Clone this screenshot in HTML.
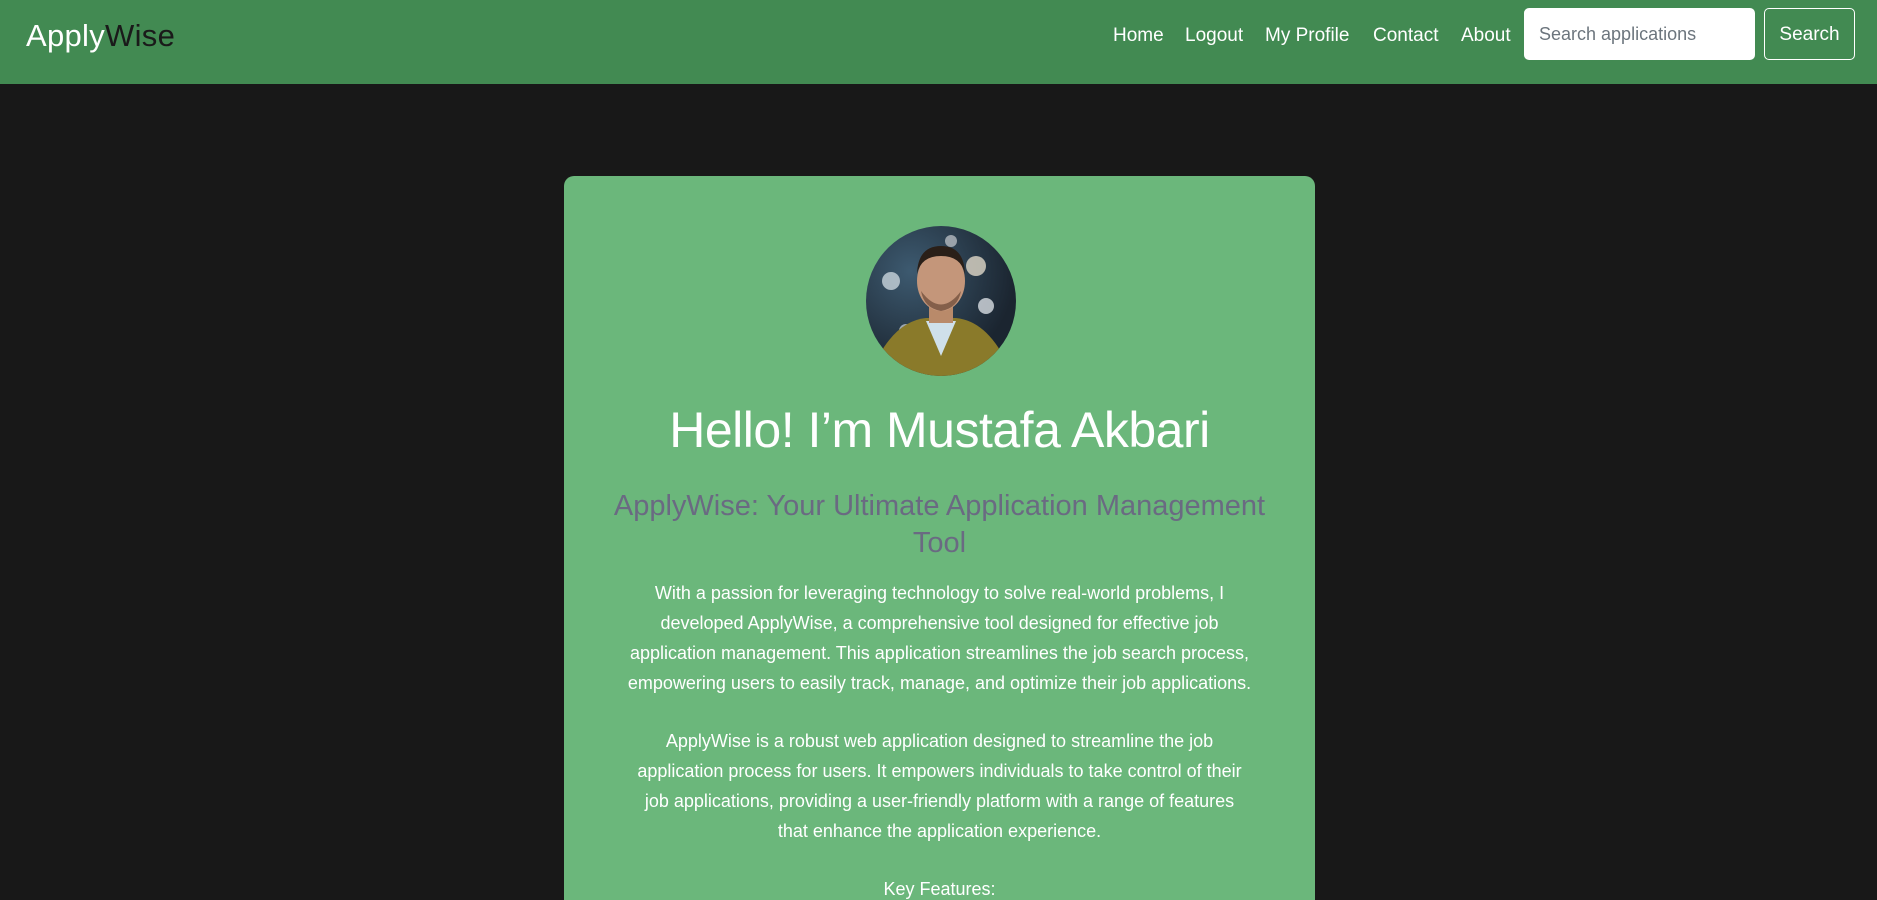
<!DOCTYPE html>
<html><head><meta charset="utf-8"><style>
*{margin:0;padding:0;box-sizing:border-box}
html,body{width:1877px;height:900px;overflow:hidden}
body{position:relative;background:#181818;font-family:"Liberation Sans",sans-serif;}
nav{position:absolute;left:0;top:0;width:1877px;height:84px;background:#428a52;}
.logo{position:absolute;left:26px;top:18px;font-size:31px;letter-spacing:0.3px;color:#fff;font-family:"Liberation Sans",sans-serif;}
.logo span{color:#1a1a1a}
.links{position:absolute;top:25px;font-size:19px;color:#fff;}
.links a{position:absolute;white-space:nowrap;color:#fff;text-decoration:none}
.inp{position:absolute;left:1524px;top:8px;width:231px;height:52px;background:#fff;border-radius:5px;font-size:18px;color:#6c757d;padding:16px 15px}
.btn{position:absolute;left:1764px;top:8px;width:91px;height:52px;border:1px solid #fff;border-radius:5px;color:#fff;font-size:19px;text-align:center;line-height:52px}
.card{position:absolute;left:564px;top:176px;width:751px;height:724px;background:#6bb77b;border-radius:10px 10px 0 0;text-align:center;color:#fff;overflow:hidden}
.av{position:absolute;left:302px;top:50px;width:150px;height:150px;border-radius:50%;overflow:hidden;background:radial-gradient(circle at 30% 30%,#3d5a70,#1b2530 70%)}
h1{position:absolute;left:0;width:751px;top:225px;font-size:50px;font-weight:normal;letter-spacing:-0.5px}
h2{position:absolute;left:30px;width:691px;top:312px;font-size:29px;font-weight:normal;color:#6a6a82;line-height:37px}
p{position:absolute;left:0;width:751px;font-size:18px;line-height:30px;white-space:nowrap}
</style></head><body>
<nav>
<div class="logo">Apply<span>Wise</span></div>
<div class="links">
<a style="left:1113px">Home</a><a style="left:1185px">Logout</a><a style="left:1265px">My Profile</a><a style="left:1373px">Contact</a><a style="left:1461px">About</a>
</div>
<div class="inp">Search applications</div>
<div class="btn">Search</div>
</nav>
<div class="card">
<div class="av">
<svg width="150" height="150" viewBox="0 0 150 150">
<circle cx="25" cy="55" r="9" fill="#c9d4dc" opacity=".8"/><circle cx="110" cy="40" r="10" fill="#e0d8c8" opacity=".8"/><circle cx="120" cy="80" r="8" fill="#d8dde2" opacity=".8"/><circle cx="40" cy="105" r="7" fill="#d0d6dc" opacity=".7"/><circle cx="85" cy="15" r="6" fill="#c8ccd0" opacity=".7"/>
<path d="M10 135 Q30 95 60 92 L90 92 Q120 95 140 135 L140 150 L10 150Z" fill="#8a7a2a"/>
<path d="M60 95 L75 130 L90 95Z" fill="#cfe0ea"/>
<rect x="63" y="75" width="24" height="22" fill="#b98a6a"/>
<ellipse cx="75" cy="55" rx="24" ry="30" fill="#c4967a"/>
<path d="M51 48 Q52 20 75 20 Q98 20 99 48 Q95 30 75 30 Q55 30 51 48Z" fill="#2a1f18"/>
<path d="M55 65 Q75 92 95 65 Q92 82 75 85 Q58 82 55 65Z" fill="#5a3a2a" opacity=".6"/>
</svg>
</div>
<h1>Hello! I’m Mustafa Akbari</h1>
<h2>ApplyWise: Your Ultimate Application Management Tool</h2>
<p style="top:402px">With a passion for leveraging technology to solve real-world problems, I<br>developed ApplyWise, a comprehensive tool designed for effective job<br>application management. This application streamlines the job search process,<br>empowering users to easily track, manage, and optimize their job applications.</p>
<p style="top:550px">ApplyWise is a robust web application designed to streamline the job<br>application process for users. It empowers individuals to take control of their<br>job applications, providing a user-friendly platform with a range of features<br>that enhance the application experience.</p>
<p style="top:698px">Key Features:</p>
</div>
</body></html>
